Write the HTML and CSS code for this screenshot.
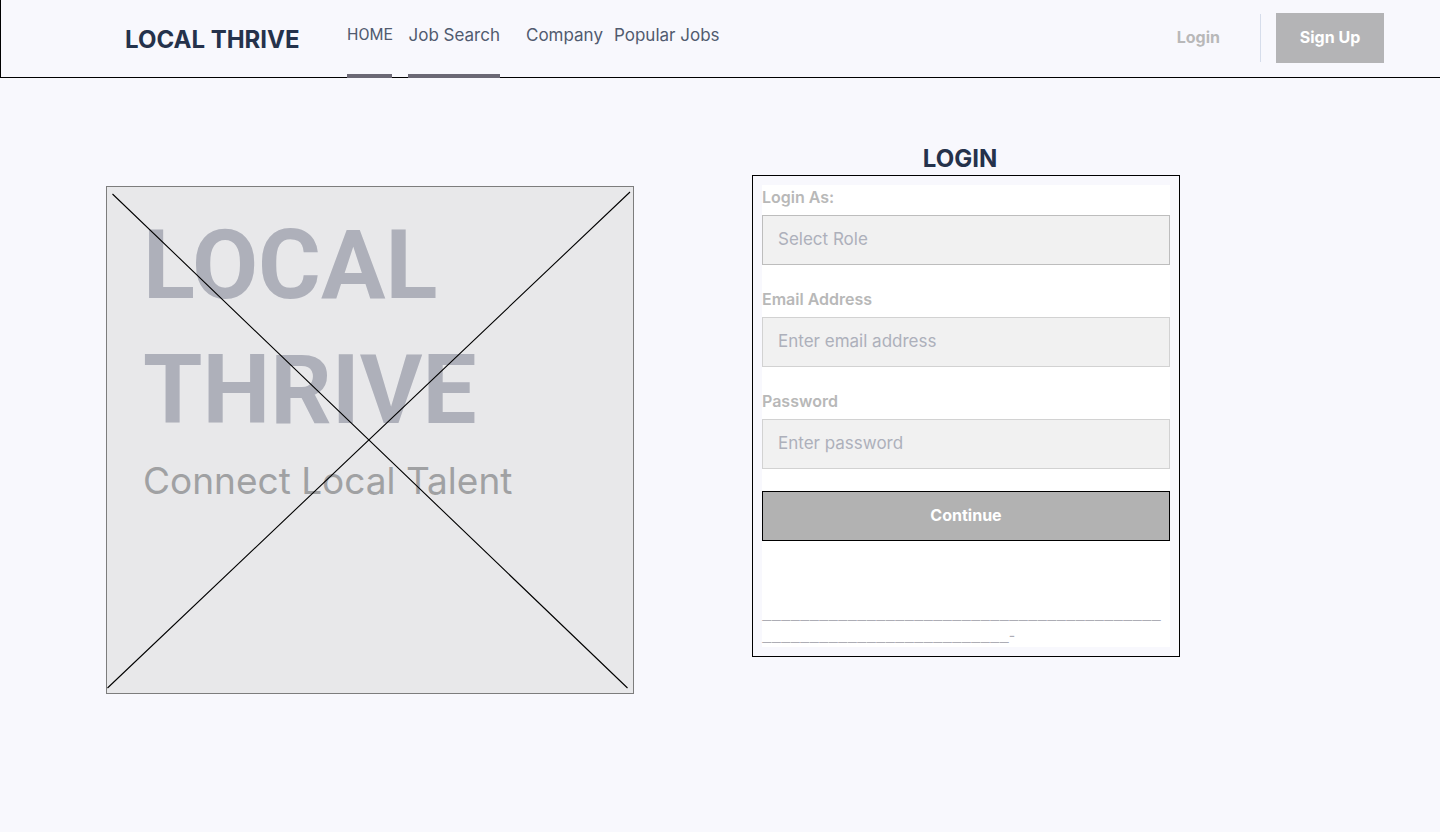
FILE: index.html
```html
<!DOCTYPE html>
<html lang="en">
<head>
<meta charset="utf-8">
<title>Local Thrive – Login</title>
<link rel="stylesheet" href="styles.css">
</head>
<body>
<header class="header">
  <a class="brand" href="#">LOCAL THRIVE</a>
  <nav class="nav">
    <a class="nav-link nav-home nav-active" href="#">HOME</a>
    <a class="nav-link nav-search nav-active" href="#">Job Search</a>
    <a class="nav-link nav-company" href="#">Company</a>
    <a class="nav-link" href="#">Popular Jobs</a>
  </nav>
  <div class="account">
    <a class="login-link" href="#">Login</a>
    <span class="divider"></span>
    <button class="signup" type="button">Sign Up</button>
  </div>
</header>
<main class="main">
  <section class="hero">
    <h1 class="hero-title">LOCAL<br>THRIVE</h1>
    <p class="hero-text">Connect Local Talent</p>
    <svg class="hero-cross" viewBox="0 0 528 508" preserveAspectRatio="none" aria-hidden="true">
      <path d="M6.500 8 521.500 502M1.500 502 524 6" fill="none" stroke="#000" stroke-width="1.100"/>
    </svg>
  </section>
  <section class="login">
    <h2 class="login-title">LOGIN</h2>
    <div class="frame">
      <form class="form">
        <label class="label" for="role">Login As:</label>
        <select class="field field-role" id="role"><option>Select Role</option></select>
        <label class="label" for="email">Email Address</label>
        <input class="field" id="email" type="email" placeholder="Enter email address">
        <label class="label" for="password">Password</label>
        <input class="field" id="password" type="password" placeholder="Enter password">
        <button class="continue" type="submit">Continue</button>
        <p class="rule">____________________________________________________________________-</p>
      </form>
    </div>
  </section>
</main>
</body>
</html>
```
FILE: styles.css
```css
* { box-sizing: border-box; }
body {
  margin: 0;
  background: #f8f8fd;
  font-family: Inter, sans-serif;
  font-size: 16px;
  color: #515b6f;
}
a { color: inherit; text-decoration: none; }
.header {
  display: flex;
  height: 78px;
  padding: 0 56px 0 124px;
  border-left: 1px solid #000;
  border-bottom: 1px solid #000;
}
.brand {
  align-self: center;
  width: 222px;
  padding-top: 2px;
  font: 700 24px/36px Inter, sans-serif;
  color: #25324b;
}
.nav { display: flex; margin-bottom: -1px; }
.nav-link {
  padding-top: 22px;
  font-size: 17px;
  line-height: 26px;
  white-space: nowrap;
  border-bottom: 4px solid transparent;
}
.nav-active { border-bottom-color: #6b6875; }
.nav-home { font-family: Roboto, sans-serif; font-size: 16px; margin-right: 16px; }
.nav-search { margin-right: 26px; }
.nav-company { margin-right: 11px; }
.account {
  display: flex;
  align-items: center;
  margin-left: auto;
  padding-bottom: 2px;
  font-weight: 700;
}
.login-link { padding-bottom: 2px; color: #b8b8b9; }
.divider { width: 1px; height: 48px; margin: 0 15px 0 40px; background: #d6ddeb; }
.signup {
  width: 108px;
  height: 50px;
  padding: 0 0 2px;
  border: 0;
  background: #b4b4b6;
  color: #fff;
  font: 700 16px/26px Inter, sans-serif;
}
.main {
  display: grid;
  grid-template-columns: 528fr 428fr;
  gap: 118px;
  align-items: start;
  padding: 64px 260px 64px 106px;
}
.hero {
  position: relative;
  min-height: 508px;
  margin-top: 44px;
  padding: 16px 36px;
  border: 1px solid #7d7d7d;
  background: #e8e8ea;
}
.hero-title {
  margin: 0;
  font: 700 96px/125px Roboto, sans-serif;
  color: #aeb0ba;
}
.hero-text {
  margin: 4px 0 0;
  font-size: 37px;
  line-height: 48px;
  color: #a0a1a3;
}
.hero-cross { position: absolute; inset: -1px; width: calc(100% + 2px); height: calc(100% + 2px); }
.login-title {
  margin: 0 12px 0 0;
  font: 700 24px/33px Inter, sans-serif;
  text-align: center;
  color: #25324b;
}
.frame { padding: 9px; border: 1px solid #000; }
.form { display: flex; flex-direction: column; background: #fff; }
.label {
  padding-bottom: 6px;
  line-height: 24px;
  font-weight: 600;
  color: #b8b8b8;
}
.field {
  appearance: none;
  width: 100%;
  height: 50px;
  margin: 0 0 22px;
  padding: 0 15px 2px;
  border: 1px solid #d2d2d2;
  border-radius: 0;
  background: #f1f1f1;
  font: 400 17px/26px Inter, sans-serif;
  color: #adb0bb;
}
.field-role { border-color: #bdbdbd; }
.field::placeholder { color: #adb0bb; opacity: 1; }
.continue {
  height: 50px;
  padding: 0 0 2px;
  border: 1px solid #000;
  background: #b2b2b2;
  color: #fff;
  font: 700 16px/26px Inter, sans-serif;
}
.rule {
  margin: 60px 0 2px;
  font-family: "Noto Sans CJK SC", sans-serif;
  font-size: 17px;
  line-height: 22px;
  overflow-wrap: anywhere;
  color: #adadb5;
}
```
